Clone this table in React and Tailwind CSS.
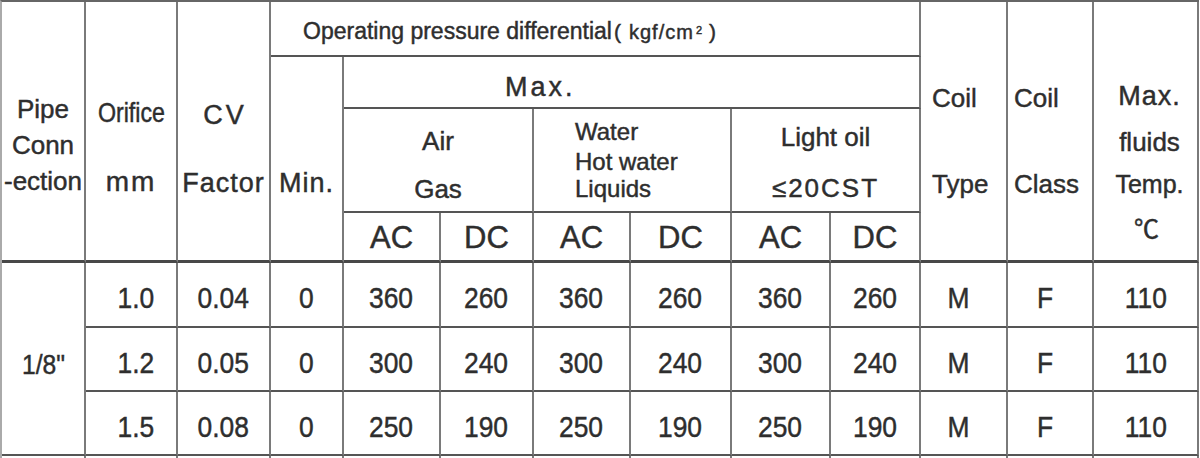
import React from "react";

const cols = ["col-start-2", "col-start-3", "col-start-4", "col-start-5", "col-start-6", "col-start-7", "col-start-8", "col-start-9", "col-start-10", "col-start-11", "col-start-12", "col-start-13"];
const rowStarts = ["row-start-5", "row-start-6", "row-start-7"];

const rows = [
  ["1.0", "0.04", "0", "360", "260", "360", "260", "360", "260", "M", "F", "110"],
  ["1.2", "0.05", "0", "300", "240", "300", "240", "300", "240", "M", "F", "110"],
  ["1.5", "0.08", "0", "250", "190", "250", "190", "250", "190", "M", "F", "110"],
];

// small shift per data column so the figures sit where the printed ones do
const shift = ["pl-[10px]", "", "", "", "", "", "", "", "", "pr-[10px]", "pr-[10px]", ""];

const cell = "border-r-2 border-b-2 border-r-[#7a7a7a] border-b-[#555] text-[#2e2e2e]";
const last = "border-b-[3px] border-b-[#484848]";

const N = ({ children }) => (
  <span className="inline-block scale-x-[0.88]">{children}</span>
);

const App = () => {
  return (
    <div className="bg-white w-[1200px] h-[458px] overflow-hidden font-['Liberation_Sans','Noto_Sans_CJK_SC',sans-serif] [-webkit-text-stroke:0.45px_#2e2e2e]">
      <div className="grid grid-cols-[84px_92px_93px_73px_97px_93px_97px_101px_99px_90px_87px_86px_105px] grid-rows-[55px_52px_104px_50px_65px_64px_64px_20px] border-l-2 border-t-2 border-l-[#aaa] border-t-[#666] w-[1199px]">
        {/* header: left block */}
        <div className={`${cell} ${last} col-start-1 row-start-1 row-span-4 flex flex-col items-center pt-[89px] text-[26px] leading-[36px]`}>
          <div>Pipe</div>
          <div>Conn</div>
          <div>-ection</div>
        </div>
        <div className={`${cell} ${last} col-start-2 row-start-1 row-span-4 flex flex-col items-center pt-[97px] text-[28px] leading-[28px]`}>
          <div className="scale-x-[0.83]">Orifice</div>
          <div className="mt-[41px] tracking-[2px]">mm</div>
        </div>
        <div className={`${cell} ${last} col-start-3 row-start-1 row-span-4 flex flex-col items-center pt-[100px] text-[27px] leading-[27px]`}>
          <div className="tracking-[3px] pl-[3px]">CV</div>
          <div className="mt-[41px] tracking-[1px]">Factor</div>
        </div>

        {/* operating pressure */}
        <div className={`${cell} col-start-4 col-span-7 row-start-1 pt-[18px] pl-[32px] leading-[23px] whitespace-nowrap`}>
          <span className="text-[23px]">Operating pressure differential</span>
          <span className="text-[21px] ml-[2px]">(</span>
          <span className="text-[20px] ml-[8px] tracking-[1px]">
            kgf/cm<sup className="text-[11px] ml-[2px]">2</sup>
          </span>
          <span className="text-[21px] ml-[6px]">)</span>
        </div>
        <div className={`${cell} ${last} col-start-4 row-start-2 row-span-3 flex flex-col items-center pt-[113px] text-[27px] leading-[27px]`}>
          <div className="tracking-[1px]">Min.</div>
        </div>
        <div className={`${cell} col-start-5 col-span-6 row-start-2 pt-[17px] pl-[161px] text-[27px] leading-[27px] tracking-[3px]`}>
          Max.
        </div>
        <div className={`${cell} col-start-5 col-span-2 row-start-3 flex flex-col items-center pt-[19px] text-[26px] leading-[26px]`}>
          <div>Air</div>
          <div className="mt-[22px]">Gas</div>
        </div>
        <div className={`${cell} col-start-7 col-span-2 row-start-3 flex flex-col items-start pt-[11px] pl-[41px] text-[24px] leading-[24px]`}>
          <div>Water</div>
          <div className="mt-[6px]">Hot water</div>
          <div className="mt-[3px]">Liquids</div>
        </div>
        <div className={`${cell} col-start-9 col-span-2 row-start-3 flex flex-col items-center pt-[15px] text-[26px] leading-[26px]`}>
          <div>Light oil</div>
          <div className="mt-[25px] tracking-[2px]">≤20CST</div>
        </div>
        <div className={`${cell} ${last} col-start-5 row-start-4 flex justify-center pt-[9px] text-[31px] leading-[31px]`}>AC</div>
        <div className={`${cell} ${last} col-start-6 row-start-4 flex justify-center pt-[9px] text-[31px] leading-[31px]`}>DC</div>
        <div className={`${cell} ${last} col-start-7 row-start-4 flex justify-center pt-[9px] text-[31px] leading-[31px]`}>AC</div>
        <div className={`${cell} ${last} col-start-8 row-start-4 flex justify-center pt-[9px] text-[31px] leading-[31px]`}>DC</div>
        <div className={`${cell} ${last} col-start-9 row-start-4 flex justify-center pt-[9px] text-[31px] leading-[31px]`}>AC</div>
        <div className={`${cell} ${last} col-start-10 row-start-4 flex justify-center pt-[9px] text-[31px] leading-[31px]`}>DC</div>

        {/* header: right block */}
        <div className={`${cell} ${last} col-start-11 row-start-1 row-span-4 flex flex-col items-start pl-[11px] pt-[83px] text-[26px] leading-[26px]`}>
          <div>Coil</div>
          <div className="mt-[60px]">Type</div>
        </div>
        <div className={`${cell} ${last} col-start-12 row-start-1 row-span-4 flex flex-col items-start pl-[6px] pt-[83px] text-[26px] leading-[26px]`}>
          <div>Coil</div>
          <div className="mt-[60px]">Class</div>
        </div>
        <div className={`${cell} ${last} col-start-13 row-start-1 row-span-4 flex flex-col items-center pl-[8px] pt-[81px]`}>
          <div className="text-[27px] leading-[27px] tracking-[1px]">Max.</div>
          <div className="mt-[19px] text-[26px] leading-[26px]">fluids</div>
          <div className="mt-[17px] text-[25px] leading-[25px]">Temp.</div>
          <div className="mt-[18px] pr-[6px] text-[25px] leading-[25px] font-['Noto_Sans_CJK_SC',sans-serif]">℃</div>
        </div>

        {/* body */}
        <div className={`${cell} col-start-1 row-start-5 row-span-3 flex justify-center pt-[88px] text-[28px] leading-[28px]`}>
          <N>1/8"</N>
        </div>
        {rows.map((r, i) =>
          r.map((v, j) => (
            <div
              key={`${i}-${j}`}
              className={`${cell} ${cols[j]} ${rowStarts[i]} ${shift[j]} flex justify-center pt-[20px] text-[30px] leading-[30px]`}
            >
              <N>{v}</N>
            </div>
          ))
        )}

        {/* next row, cut off by the page edge */}
        <div className="border-r-2 border-r-[#7a7a7a] col-start-1 row-start-8"></div>
        {cols.map((c) => (
          <div key={c} className={`border-r-2 border-r-[#7a7a7a] ${c} row-start-8`}></div>
        ))}
      </div>
    </div>
  );
};

export default App;
